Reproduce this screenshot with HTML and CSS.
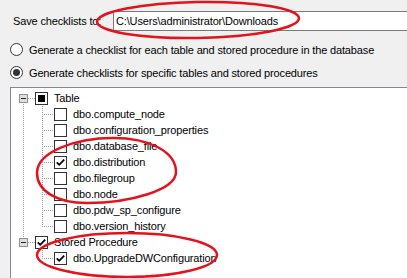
FILE: index.html
```html
<!DOCTYPE html>
<html lang="en">
<head>
    <meta charset="UTF-8">
    <meta name="viewport" content="width=device-width, initial-scale=1.0">
    <title>Generate Checklists</title>
    <link rel="stylesheet" href="styles.css">
</head>
<body>
    <div class="page">
        <div class="save-row">
            <label class="save-label" for="save-path">Save checklists to:</label>
            <input class="path-input" id="save-path" type="text" value="C:\Users\administrator\Downloads">
        </div>

        <div class="radio-row">
            <span class="radio"></span>
            <span>Generate a checklist for each table and stored procedure in the database</span>
        </div>
        <div class="radio-row">
            <span class="radio radio-on"></span>
            <span>Generate checklists for specific tables and stored procedures</span>
        </div>

        <div class="tree">
            <div class="tree-row">
                <span class="root-cell root-first"><span class="expander"></span></span>
                <span class="check check-mixed"></span>
                <span class="node-label">Table</span>
            </div>
            <div class="tree-row">
                <span class="indent pass"></span><span class="branch"></span>
                <span class="check"></span>
                <span class="node-label">dbo.compute_node</span>
            </div>
            <div class="tree-row">
                <span class="indent pass"></span><span class="branch"></span>
                <span class="check"></span>
                <span class="node-label">dbo.configuration_properties</span>
            </div>
            <div class="tree-row">
                <span class="indent pass"></span><span class="branch"></span>
                <span class="check"></span>
                <span class="node-label">dbo.database_file</span>
            </div>
            <div class="tree-row">
                <span class="indent pass"></span><span class="branch"></span>
                <span class="check check-on"><svg viewBox="0 0 11 11"><path d="M1.8 5.4 L4.2 7.8 L9.2 2.6"/></svg></span>
                <span class="node-label">dbo.distribution</span>
            </div>
            <div class="tree-row">
                <span class="indent pass"></span><span class="branch"></span>
                <span class="check"></span>
                <span class="node-label">dbo.filegroup</span>
            </div>
            <div class="tree-row">
                <span class="indent pass"></span><span class="branch"></span>
                <span class="check"></span>
                <span class="node-label">dbo.node</span>
            </div>
            <div class="tree-row">
                <span class="indent pass"></span><span class="branch"></span>
                <span class="check"></span>
                <span class="node-label">dbo.pdw_sp_configure</span>
            </div>
            <div class="tree-row">
                <span class="indent pass"></span><span class="branch branch-last"></span>
                <span class="check"></span>
                <span class="node-label">dbo.version_history</span>
            </div>
            <div class="tree-row">
                <span class="root-cell root-last"><span class="expander"></span></span>
                <span class="check check-on"><svg viewBox="0 0 11 11"><path d="M1.8 5.4 L4.2 7.8 L9.2 2.6"/></svg></span>
                <span class="node-label">Stored Procedure</span>
            </div>
            <div class="tree-row">
                <span class="indent"></span><span class="branch branch-last"></span>
                <span class="check check-on"><svg viewBox="0 0 11 11"><path d="M1.8 5.4 L4.2 7.8 L9.2 2.6"/></svg></span>
                <span class="node-label">dbo.UpgradeDWConfiguration</span>
            </div>
        </div>

        <!-- red annotation rings drawn over the dialog -->
        <svg class="marks" viewBox="0 0 407 278">
            <ellipse cx="198" cy="20" rx="101" ry="18" transform="rotate(-1 198 20)"/>
            <path d="M37 173 C37 152 75 138 113 138 C150 138 176 152 176 172 C176 190 130 203 87 203 C55 203 37 190 37 173 Z"/>
            <ellipse cx="127" cy="255" rx="90" ry="22"/>
        </svg>
    </div>
</body>
</html>
```

FILE: styles.css
```css
:root {
    --dialog-bg: #f0f0f0;
    --frame: #828790;
    --dot: #a0a0a0;
    --ink: #000000;
    --ring: #e3121c;
}

body {
    margin: 0;
    background-color: var(--dialog-bg);
    font-family: 'Liberation Sans', Arial, sans-serif;
    font-size: 11px;
    letter-spacing: -0.15px;
    color: var(--ink);
}

.page {
    position: relative;
    width: 407px;
    height: 278px;
    overflow: hidden;
}

.save-row {
    display: flex;
    align-items: center;
    padding: 11px 0 0 13px;
    height: 20px;
}

.save-label {
    width: 100px;
    flex: none;
}

.path-input {
    flex: none;
    width: 320px;
    height: 20px;
    box-sizing: border-box;
    margin: 0;
    padding: 0 0 0 2px;
    border: 1px solid #7a7a7a;
    background: white;
    font: inherit;
    letter-spacing: inherit;
    color: var(--ink);
    outline: none;
}

.radio-row {
    display: flex;
    align-items: center;
    gap: 6px;
    height: 23px;
    padding-left: 10px;
}

.save-row + .radio-row {
    margin-top: 7px;
}

.radio {
    width: 13px;
    height: 13px;
    box-sizing: border-box;
    border: 1px solid #333;
    border-radius: 50%;
    background: white;
    display: flex;
    align-items: center;
    justify-content: center;
}

.radio-on::before {
    content: "";
    width: 7px;
    height: 7px;
    border-radius: 50%;
    background: #333;
}

.tree {
    margin: 3px 0 0 10px;
    height: 200px;
    padding-top: 2px;
    border-top: 1px solid var(--frame);
    border-left: 1px solid var(--frame);
    background: white;
}

.tree-row {
    display: flex;
    align-items: center;
    height: 16px;
}

.root-cell,
.indent {
    width: 24px;
    height: 16px;
    flex: none;
    display: flex;
    align-items: center;
}

.root-first {
    background:
        repeating-linear-gradient(to right, var(--dot) 0 1px, transparent 1px 2px) 17px 8px / 7px 1px no-repeat,
        repeating-linear-gradient(to bottom, var(--dot) 0 1px, transparent 1px 2px) 12px 8px / 1px 8px no-repeat;
}

.root-last {
    background:
        repeating-linear-gradient(to right, var(--dot) 0 1px, transparent 1px 2px) 17px 8px / 7px 1px no-repeat,
        repeating-linear-gradient(to bottom, var(--dot) 0 1px, transparent 1px 2px) 12px 0 / 1px 8px no-repeat;
}

.indent.pass {
    background: repeating-linear-gradient(to bottom, var(--dot) 0 1px, transparent 1px 2px) 12px 0 / 1px 16px no-repeat;
}

.branch {
    width: 19px;
    height: 16px;
    flex: none;
    background:
        repeating-linear-gradient(to right, var(--dot) 0 1px, transparent 1px 2px) 7px 8px / 12px 1px no-repeat,
        repeating-linear-gradient(to bottom, var(--dot) 0 1px, transparent 1px 2px) 7px 0 / 1px 16px no-repeat;
}

.branch-last {
    background:
        repeating-linear-gradient(to right, var(--dot) 0 1px, transparent 1px 2px) 7px 8px / 12px 1px no-repeat,
        repeating-linear-gradient(to bottom, var(--dot) 0 1px, transparent 1px 2px) 7px 0 / 1px 9px no-repeat;
}

.expander {
    width: 9px;
    height: 9px;
    box-sizing: border-box;
    margin-left: 8px;
    border: 1px solid #919191;
    background: #dedede;
    display: flex;
    align-items: center;
    justify-content: center;
}

.expander::before {
    content: "";
    width: 5px;
    height: 1px;
    background: #222;
}

.check {
    width: 13px;
    height: 13px;
    flex: none;
    box-sizing: border-box;
    border: 1px solid #333;
    background: white;
    display: flex;
    align-items: center;
    justify-content: center;
}

.check-mixed::before {
    content: "";
    width: 7px;
    height: 7px;
    background: #000;
}

.check svg {
    width: 11px;
    height: 11px;
    fill: none;
    stroke: #000;
    stroke-width: 1.8;
}

.node-label {
    margin-left: 6px;
    white-space: nowrap;
}

.marks {
    position: absolute;
    left: 0;
    top: 0;
    width: 407px;
    height: 278px;
    pointer-events: none;
    fill: none;
    stroke: var(--ring);
    stroke-width: 2.5;
}
```
